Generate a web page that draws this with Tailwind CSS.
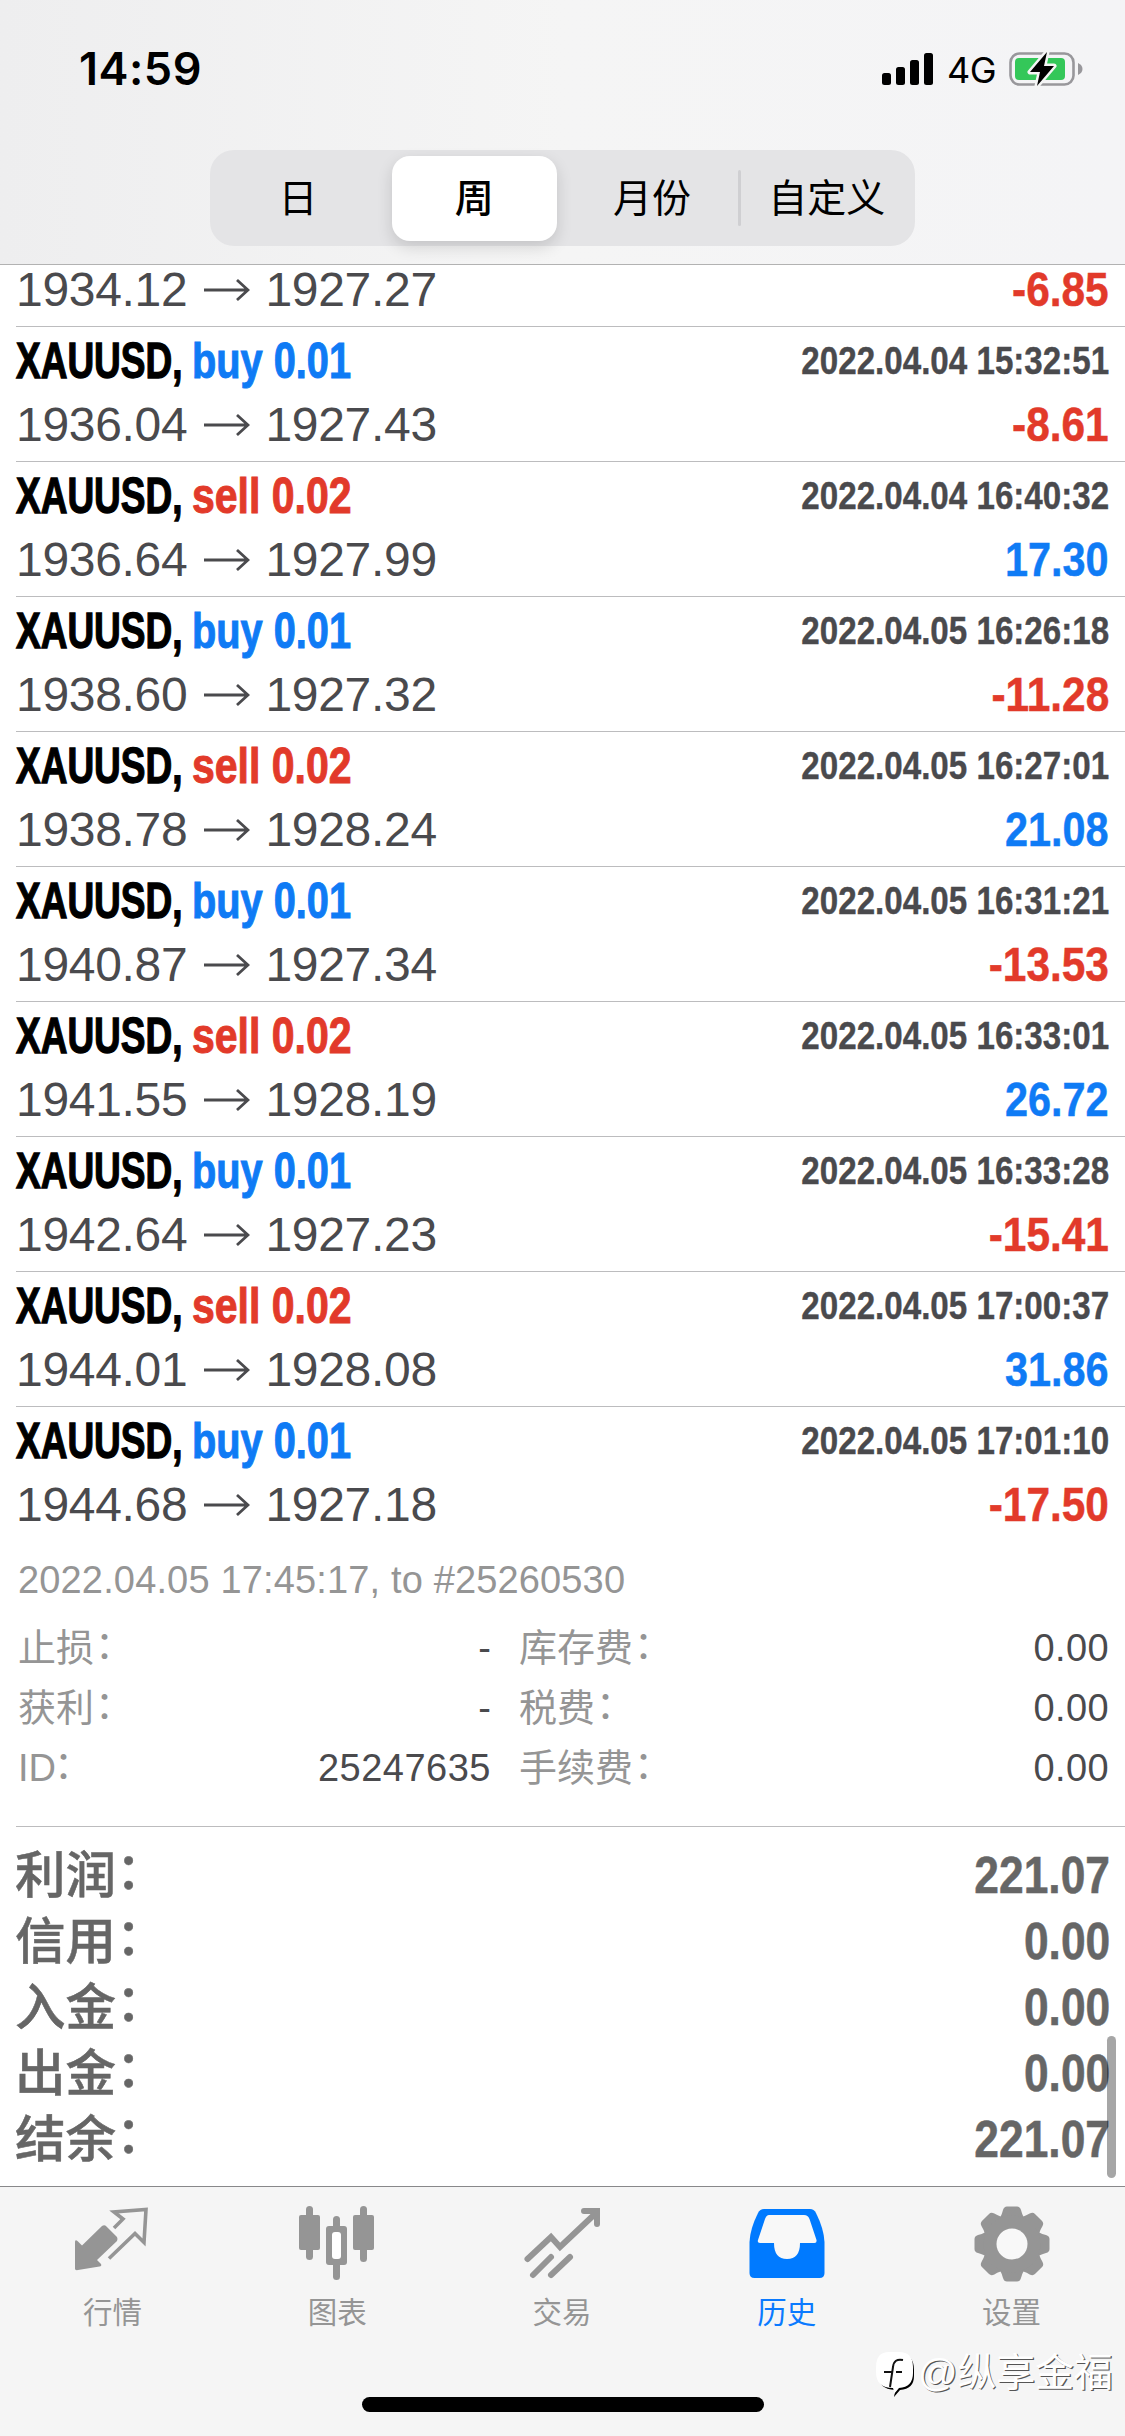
<!DOCTYPE html>
<html lang="zh-CN">
<head>
<meta charset="utf-8">
<title>历史</title>
<script src="https://cdn.jsdelivr.net/npm/@tailwindcss/browser@4"></script>
</head>
<body class="w-[1125px] h-[2436px] overflow-hidden bg-white font-['Liberation_Sans','Noto_Sans_CJK_SC',sans-serif] text-[#4a4a4d]">
<div class="relative flex h-[2436px] flex-col">
  <header class="h-[265px] shrink-0 border-b border-[#b2b2b2] bg-linear-to-r from-[#eeeeef] via-[#f5f5f5] to-[#f4f4f6] text-black">
    <div class="flex h-[150px] items-start justify-between pl-[79px] pr-[42px] pt-[45px]">
      <div class="font-['Inter'] text-[45px] font-semibold leading-[48px] tracking-[0.5px]">14:59</div>
      <div class="flex items-start pt-[6px]">
        <svg class="mt-[2px]" width="52" height="33" viewBox="0 0 52 33"><rect x="0" y="20" width="9" height="12" rx="2.5"/><rect x="14" y="14" width="9" height="18" rx="2.5"/><rect x="28" y="7" width="9" height="25" rx="2.5"/><rect x="42" y="0" width="9" height="32" rx="2.5"/></svg>
        <span class="ml-[13px] w-[61px] font-['Inter'] text-[36px] leading-[38px] tracking-[-0.5px]">4G</span>
        <svg width="75" height="38" viewBox="0 0 75 38"><rect x="2.5" y="2.5" width="63" height="31" rx="9" fill="none" stroke="#98979b" stroke-width="2.6"/><path d="M70 12c6 2.500 6 9.500 0 12z" fill="#98979b"/><rect x="7" y="7" width="50" height="22" rx="4" fill="#34c759"/><path d="M39 1 22 21h10l-3 14L46 15H36z" stroke="#f5f5f5" stroke-width="5" stroke-linejoin="round"/><path d="M39 1 22 21h10l-3 14L46 15H36z"/></svg>
      </div>
    </div>
    <nav class="ml-[210px] grid h-[96px] w-[705px] grid-cols-4 rounded-[24px] bg-[#e4e4e6] text-center text-[39px] leading-[97px]">
      <span>日</span>
      <span class="m-[6px] rounded-[18px] bg-white font-medium leading-[85px] shadow-[0_6px_16px_rgba(0,0,0,0.14)]">周</span>
      <span class="pl-[3px]">月份</span>
      <span class="relative">自定义<i class="absolute -left-px top-[20px] h-[56px] w-[3px] rounded bg-[#cfcfd2]"></i></span>
    </nav>
  </header>

  <main class="h-[1921px] shrink-0">
    <section id="deals"></section>

    <section class="h-[285px] pl-[18px] pr-[15px] pt-[9px] text-[38px] leading-[60px] text-[#959595]">
      <p class="tracking-[0.15px]">2022.04.05 17:45:17, to #25260530</p>
      <div class="mt-[8px] grid grid-cols-[473px_590px] gap-x-[28px]">
        <p class="flex justify-between"><span>止损<span class="relative left-px -top-[3px]">：</span></span><b class="font-normal text-[#4a4a4d]">-</b></p>
        <p class="flex justify-between"><span>库存费<span class="relative left-px -top-[3px]">：</span></span><b class="font-normal tracking-[0.4px] text-[#4a4a4d]">0.00</b></p>
        <p class="flex justify-between"><span>获利<span class="relative left-px -top-[3px]">：</span></span><b class="font-normal text-[#4a4a4d]">-</b></p>
        <p class="flex justify-between"><span>税费<span class="relative left-px -top-[3px]">：</span></span><b class="font-normal tracking-[0.4px] text-[#4a4a4d]">0.00</b></p>
        <p class="flex justify-between"><span>ID<span class="relative -left-[2px] -top-[3px]">：</span></span><b class="font-normal tracking-[0.5px] text-[#4a4a4d]">25247635</b></p>
        <p class="flex justify-between"><span>手续费<span class="relative left-px -top-[3px]">：</span></span><b class="font-normal tracking-[0.4px] text-[#4a4a4d]">0.00</b></p>
      </div>
    </section>

    <section id="totals" class="ml-[16px] border-t border-[#bcbcbe] pr-[15px] pt-[16px] text-[51px] leading-[66px] text-[#666]"></section>
  </main>

  <footer class="grid h-[250px] shrink-0 grid-cols-5 border-t border-[#88888a] bg-[#f5f5f5] pr-px text-center text-[29.5px] leading-[39px] text-[#959595]">
    <div><svg class="mx-auto mt-[19px] mb-[11px]" width="76" height="76" viewBox="0 0 76 76" fill="#959595"><path d="M1 60V36q0-3 3-.5l4 4L28 20q2.500-1.500 4.500.5L43 31q1 2 0 4L23 54l4 4q1 2-1.500 2.500L4 64q-3 .5-3-1z"/><path d="M40 22l9-9-9-7 32-2.500-2 33-9-9-26 25" fill="none" stroke="#959595" stroke-width="3.600"/></svg>行情</div>
    <div><svg class="mx-auto mt-[19px] mb-[11px] overflow-visible" width="76" height="76" viewBox="1 0 76 76" fill="#959595"><rect x="8" y="0" width="7" height="54" rx="3.500"/><rect x="1" y="9" width="21" height="35" rx="2"/><rect x="35" y="10" width="7" height="64" rx="3.500"/><rect x="28" y="20" width="21" height="39" rx="3"/><rect x="34" y="26" width="9" height="27" rx="3" fill="#fff"/><rect x="62" y="0" width="7" height="56" rx="3.500"/><rect x="55" y="9" width="21" height="35" rx="2"/></svg>图表</div>
    <div><svg class="mx-auto mt-[19px] mb-[11px]" width="76" height="76" viewBox="0 0 76 76" fill="none" stroke="#959595" stroke-width="6" stroke-linecap="round"><path d="M3.500 53 27 31l9 10L72 7M60 5h13v13"/><path d="M9 69 27 51M27 69 46 51"/></svg>交易</div>
    <div class="text-[#0a7aff]"><svg class="mx-auto mt-[19px] mb-[11px]" width="76" height="76" viewBox="0 0 76 76"><path d="M15 3h46q4 0 6 4 8 16 8.500 29v31q0 5-5 5H5.500q-5 0-5-5V36Q1 23 9 7q2-4 6-4z" fill="#007aff"/><path d="M20 9h35q4 0 5.500 4L67.500 34q.5 3-2 3H51q0 16-13 16T25 37H11q-3 0-2-3l7-21q1.500-4 4-4z" fill="#f8f8f8"/></svg>历史</div>
    <div><svg class="mx-auto mt-[19px] mb-[11px]" width="76" height="76" viewBox="-38 -38 76 76" fill="#959595"><path id="t" d="M-15-23Q-11-26-9-34q1-3.500 4-3.500H5q3 0 4 3.500 2 8 6 11z"/><use href="#t" transform="rotate(45)"/><use href="#t" transform="rotate(90)"/><use href="#t" transform="rotate(135)"/><use href="#t" transform="rotate(180)"/><use href="#t" transform="rotate(225)"/><use href="#t" transform="rotate(270)"/><use href="#t" transform="rotate(315)"/><circle r="28.500"/><circle r="15.500" fill="#f8f8f8"/></svg>设置</div>
  </footer>

  <div class="absolute left-[1107px] top-[2036px] h-[142px] w-[9px] rounded-full bg-black/35"></div>
  <div class="absolute left-[362px] top-[2397px] h-[15px] w-[402px] rounded-full bg-black"></div>
  <div class="absolute left-[875px] top-[2348px] flex items-center whitespace-nowrap text-[39px] leading-[46px] text-white">
    <svg class="mr-[2px] shrink-0" width="41" height="50" viewBox="0 0 41 50"><path d="M15 6h10Q39 6 39 22v6q0 13-14 14l-6 7q1-5 1-7Q3 41 3 26v-5Q3 6 15 6z" fill="#000"/><path d="M14 4h10q14 0 14 15v6q0 14-14 15l-5 6q0-4-1-6Q1 40 1 24v-5Q1 4 14 4z" fill="#fff"/><path d="M28 12q-9-2-10 7l-3 20M9 24h8M21 24h6" fill="none" stroke="#111" stroke-width="2"/></svg>
    <span class="tracking-[-0.2px] [text-shadow:1.2px_1.2px_0_#555]">@纵享金福</span>
  </div>
</div>
<script>
const deals = [
  ['buy 0.01','2022.04.04 15:32:51','1936.04','1927.43','-8.61'],
  ['sell 0.02','2022.04.04 16:40:32','1936.64','1927.99','17.30'],
  ['buy 0.01','2022.04.05 16:26:18','1938.60','1927.32','-11.28'],
  ['sell 0.02','2022.04.05 16:27:01','1938.78','1928.24','21.08'],
  ['buy 0.01','2022.04.05 16:31:21','1940.87','1927.34','-13.53'],
  ['sell 0.02','2022.04.05 16:33:01','1941.55','1928.19','26.72'],
  ['buy 0.01','2022.04.05 16:33:28','1942.64','1927.23','-15.41'],
  ['sell 0.02','2022.04.05 17:00:37','1944.01','1928.08','31.86'],
  ['buy 0.01','2022.04.05 17:01:10','1944.68','1927.18','-17.50'],
];
const tone = red => red ? 'text-[#e23a2a]' : 'text-[#0f7bf5]';
const arrow = '<svg class="ml-[16px] mr-[15px]" width="47" height="24" viewBox="0 0 47 24" fill="none" stroke="#4a4a4d" stroke-width="2.8"><path d="M1 12h44M34 2l11 10-11 10"/></svg>';
const prices = (from, to, profit) => `
  <span class="flex items-center text-[48px] tracking-[-0.3px]">${from}${arrow}${to}</span>
  <span class="origin-right text-[49px] font-bold ${profit[0] === '-' ? 'scale-x-[0.865]' : 'scale-x-[0.845]'} ${tone(profit[0] === '-')} [-webkit-text-stroke:0.5px]">${profit}</span>`;
document.getElementById('deals').innerHTML =
  `<div class="ml-[16px] flex h-[61px] items-start justify-between pr-[16px] leading-[49px]">${prices('1934.12', '1927.27', '-6.85')}</div>` +
  deals.map(([side, time, from, to, profit]) => `
  <div class="ml-[16px] h-[135px] border-t border-[#bcbcbe] pr-[16px] pt-[2px]">
    <div class="flex justify-between leading-[63px]">
      <span class="flex text-[50px] font-bold leading-[65px]">
        <span class="w-[176px]"><span class="inline-block origin-left scale-x-[0.74] text-black [-webkit-text-stroke:1.3px]">XAUUSD,</span></span>
        <span class="origin-left whitespace-nowrap ${side[0] === 's' ? 'scale-x-[0.82]' : 'scale-x-[0.795]'} ${tone(side[0] === 's')} [-webkit-text-stroke:1px]">${side}</span>
      </span>
      <span class="origin-right scale-x-[0.85] text-[39px] font-bold [-webkit-text-stroke:0.4px]">${time}</span>
    </div>
    <div class="-mt-[2px] flex justify-between leading-[65px]">${prices(from, to, profit)}</div>
  </div>`).join('');
document.getElementById('totals').innerHTML =
  [['利润','221.07'],['信用','0.00'],['入金','0.00'],['出金','0.00'],['结余','221.07']].map(([k, v]) => `
  <div class="flex justify-between"><span class="-ml-px text-[50.5px] font-medium [-webkit-text-stroke:0.5px]">${k}<span class="relative -top-[4px]">：</span></span><b class="origin-right scale-x-[0.87] [-webkit-text-stroke:0.5px]">${v}</b></div>`).join('');
</script>
</body>
</html>
